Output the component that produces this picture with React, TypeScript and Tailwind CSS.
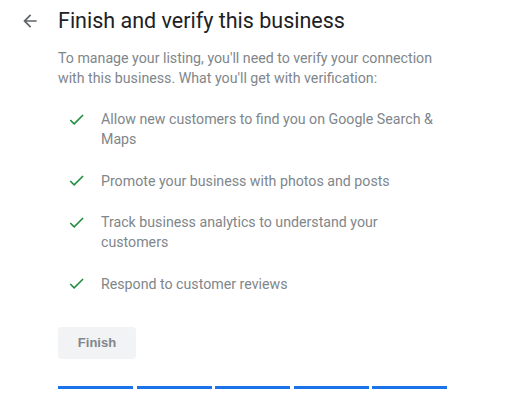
const perks = [
  'Allow new customers to find you on Google Search & Maps',
  'Promote your business with photos and posts',
  'Track business analytics to understand your customers',
  'Respond to customer reviews',
]

function CheckIcon() {
  return (
    <svg viewBox="0 0 24 24" width={19} height={19} className="shrink-0 fill-[#1e8e3e]">
      <path d="M9 16.17L4.83 12l-1.42 1.41L9 19 21 7l-1.41-1.41z" />
    </svg>
  )
}

export default function App() {
  return (
    <div className="h-[410px] w-[509px] bg-white font-['Roboto',sans-serif]">
      <div className="flex items-center pt-[7px]">
        <div className="flex w-[58px] justify-start pl-[20px]">
          <svg viewBox="0 0 24 24" width={20} height={20} className="fill-[#5f6368]">
            <path d="M20 11H7.83l5.59-5.59L12 4l-8 8 8 8 1.41-1.41L7.83 13H20v-2z" />
          </svg>
        </div>
        <h1 className="text-[21.5px] leading-[28px] text-[#202124]">
          Finish and verify this business
        </h1>
      </div>

      <div className="pl-[58px] pr-[40px]">
        <p className="mt-[13px] w-[385px] text-[14.2px] leading-[20px] text-[#80868b]">
          To manage your listing, you'll need to verify your connection with
          this business. What you'll get with verification:
        </p>

        <ul className="mt-[21px] flex flex-col gap-[21.5px] pl-[9px]">
          {perks.map((p) => (
            <li key={p} className="flex items-start gap-[15px]">
              <span className="flex h-[20px] items-center">
                <CheckIcon />
              </span>
              <span className="w-[340px] text-[14.2px] leading-[20px] text-[#80868b]">
                {p}
              </span>
            </li>
          ))}
        </ul>

        <button className="mt-[33px] h-[32px] w-[78px] rounded-[4px] bg-[#f1f3f4] font-['Liberation_Sans',sans-serif] text-[13px] font-bold text-[#80868b]">
          Finish
        </button>

        <div className="mt-[27px] flex w-[389px] gap-[3.5px]">
          {[0, 1, 2, 3, 4].map((i) => (
            <div key={i} className="h-[3px] flex-1 bg-[#1a73e8]" />
          ))}
        </div>
      </div>
    </div>
  )
}
